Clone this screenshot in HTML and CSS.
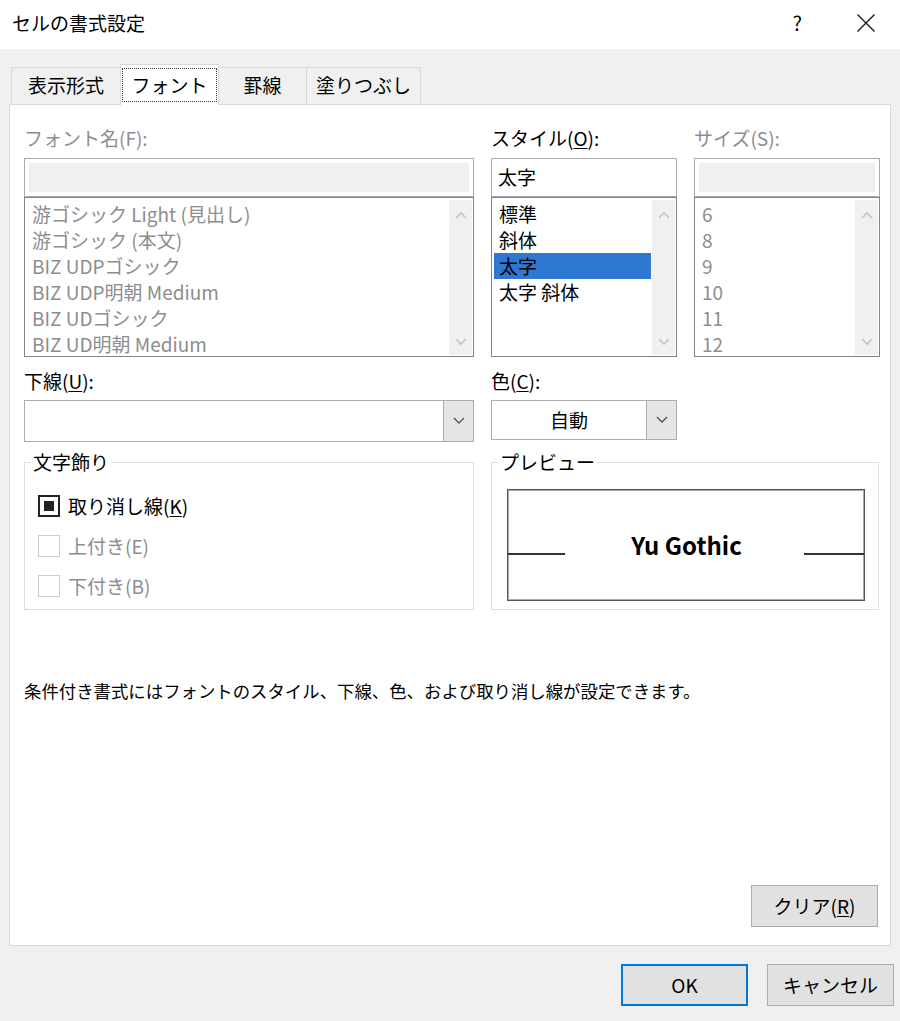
FILE: index.html
```html
<!DOCTYPE html>
<html lang="ja">
<head>
<meta charset="utf-8">
<title>セルの書式設定</title>
<link rel="stylesheet" href="styles.css">
</head>
<body>
<div class="dialog">
  <div class="titlebar">
    <div class="title">セルの書式設定</div>
    <div class="title-btns">
      <span class="help">?</span>
      <svg class="close" width="20" height="20" viewBox="0 0 20 20"><path d="M1.5 1.5 L18.5 18.5 M18.5 1.5 L1.5 18.5" stroke="#1a1a1a" stroke-width="1.4" fill="none"/></svg>
    </div>
  </div>

  <div class="tabs">
    <div class="tab t1">表示形式</div>
    <div class="tab active"><span class="focus">フォント</span></div>
    <div class="tab t3">罫線</div>
    <div class="tab t4">塗りつぶし</div>
  </div>

  <div class="panel">
    <div class="grid">
      <div class="label disabled">フォント名(F):</div>
      <div class="label">スタイル(<u>O</u>):</div>
      <div class="label disabled">サイズ(S):</div>

      <div class="input disabled"><div class="fill"></div></div>
      <div class="input"><span class="val">太字</span></div>
      <div class="input disabled"><div class="fill"></div></div>

      <div class="list disabled">
        <div class="items">
          <div class="item">游ゴシック Light (見出し)</div>
          <div class="item">游ゴシック (本文)</div>
          <div class="item">BIZ UDPゴシック</div>
          <div class="item">BIZ UDP明朝 Medium</div>
          <div class="item">BIZ UDゴシック</div>
          <div class="item">BIZ UD明朝 Medium</div>
        </div>
        <div class="sbar">
          <svg width="14" height="10" viewBox="0 0 14 10"><path d="M2 8 L7 3 L12 8" stroke="#c4c4c4" stroke-width="1.6" fill="none"/></svg>
          <svg width="14" height="10" viewBox="0 0 14 10"><path d="M2 2 L7 7 L12 2" stroke="#c4c4c4" stroke-width="1.6" fill="none"/></svg>
        </div>
      </div>
      <div class="list">
        <div class="items">
          <div class="item">標準</div>
          <div class="item">斜体</div>
          <div class="item sel">太字</div>
          <div class="item">太字 斜体</div>
        </div>
        <div class="sbar">
          <svg width="14" height="10" viewBox="0 0 14 10"><path d="M2 8 L7 3 L12 8" stroke="#c4c4c4" stroke-width="1.6" fill="none"/></svg>
          <svg width="14" height="10" viewBox="0 0 14 10"><path d="M2 2 L7 7 L12 2" stroke="#c4c4c4" stroke-width="1.6" fill="none"/></svg>
        </div>
      </div>
      <div class="list disabled">
        <div class="items">
          <div class="item">6</div>
          <div class="item">8</div>
          <div class="item">9</div>
          <div class="item">10</div>
          <div class="item">11</div>
          <div class="item">12</div>
        </div>
        <div class="sbar">
          <svg width="14" height="10" viewBox="0 0 14 10"><path d="M2 8 L7 3 L12 8" stroke="#c4c4c4" stroke-width="1.6" fill="none"/></svg>
          <svg width="14" height="10" viewBox="0 0 14 10"><path d="M2 2 L7 7 L12 2" stroke="#c4c4c4" stroke-width="1.6" fill="none"/></svg>
        </div>
      </div>

      <div class="label row2">下線(<u>U</u>):</div>
      <div class="label row2 span2">色(<u>C</u>):</div>

      <div class="combo under">
        <div class="cval"></div>
        <div class="cbtn"><svg width="14" height="10" viewBox="0 0 14 10"><path d="M2 2 L7 7 L12 2" stroke="#555" stroke-width="1.4" fill="none"/></svg></div>
      </div>
      <div class="combo color">
        <div class="cval center">自動</div>
        <div class="cbtn"><svg width="14" height="10" viewBox="0 0 14 10"><path d="M2 2 L7 7 L12 2" stroke="#555" stroke-width="1.4" fill="none"/></svg></div>
      </div>
      <div></div>

      <fieldset class="group effects">
        <legend>文字飾り</legend>
        <div class="check"><span class="box on"><span class="dot"></span></span><span>取り消し線(<u>K</u>)</span></div>
        <div class="check disabled"><span class="box"></span><span>上付き(E)</span></div>
        <div class="check disabled"><span class="box"></span><span>下付き(B)</span></div>
      </fieldset>
      <fieldset class="group preview">
        <legend>プレビュー</legend>
        <div class="pbox">
          <div class="pline left"></div>
          <div class="ptext">Yu Gothic</div>
          <div class="pline right"></div>
        </div>
      </fieldset>
    </div>

    <p class="note">条件付き書式にはフォントのスタイル、下線、色、および取り消し線が設定できます。</p>

    <div class="panel-foot">
      <button class="btn">クリア(<u>R</u>)</button>
    </div>
  </div>

  <div class="footer">
    <button class="btn default">OK</button>
    <button class="btn">キャンセル</button>
  </div>
</div>
</body>
</html>
```

FILE: styles.css
```css
* { box-sizing: border-box; }
html, body { margin: 0; padding: 0; }
body {
  background: #f0f0f0;
  font-family: "Noto Sans CJK JP", "Noto Sans", sans-serif;
  font-size: 19px;
  color: #000;
  width: 900px;
  height: 1021px;
  overflow: hidden;
}
u { text-decoration: underline; text-underline-offset: 2px; text-decoration-thickness: 1px; }

.titlebar {
  height: 49px;
  background: #fff;
  display: flex;
  align-items: center;
  justify-content: space-between;
  padding: 0 24px 0 12px;
}
.title { font-size: 19px; line-height: 26px; margin-top: -4px; }
.title-btns { display: flex; align-items: center; gap: 54px; margin-top: -4px; }
.help { font-size: 20px; line-height: 26px; }

.tabs {
  display: flex;
  align-items: flex-end;
  height: 55px;
  padding-left: 11px;
}
.tab {
  height: 37px;
  border: 1px solid #d9d9d9;
  border-bottom: none;
  background: #f0f0f0;
  font-size: 19px;
  line-height: 34px;
  text-align: center;
  margin-right: -1px;
}
.t1 { width: 110px; }
.t3 { width: 89px; }
.t4 { width: 115px; }
.tab.active {
  width: 99px;
  height: 41px;
  background: #fff;
  position: relative;
  z-index: 2;
  margin-bottom: -1px;
  padding-top: 3px;
}
.focus {
  display: inline-block;
  border: 1px dotted #333;
  padding: 0 8px;
  line-height: 32px;
}

.panel {
  margin: 0 9px;
  height: 842px;
  background: #fff;
  border: 1px solid #d9d9d9;
  padding: 20px 10px 18px 14px;
  display: flex;
  flex-direction: column;
}
.grid {
  display: grid;
  grid-template-columns: 450px 186px 186px;
  column-gap: 17px;
}
.label { line-height: 26px; margin-bottom: 7px; }
.label.row2 { margin-top: 11px; margin-bottom: 6px; }
.span2 { grid-column: span 2; }
.disabled { color: #8d8d8d; }

.input {
  height: 39px;
  border: 1px solid #adadad;
  padding: 4px;
}
.input .fill { background: #f0f0f0; height: 100%; }
.input .val { display: block; line-height: 28px; padding-left: 2px; color: #000; }

.list {
  height: 160px;
  border: 1px solid #828282;
  display: flex;
  padding: 2px 1px 1px 1px;
}
.list .items { flex: 1; padding-top: 1px; }
.item { line-height: 26px; padding-left: 6px; white-space: nowrap; }
.item.sel { background: #2e78d3; color: #fff; margin: 0 1px 0 1px; padding-left: 5px; }
.list:not(.disabled) .item { color: #000; }
.sbar {
  width: 23px;
  background: #f0f0f0;
  display: flex;
  flex-direction: column;
  justify-content: space-between;
  align-items: center;
  padding: 10px 0 8px;
}

.combo {
  border: 1px solid #adadad;
  display: flex;
  background: #fff;
}
.combo.under { height: 42px; }
.combo.color { height: 40px; }
.cval { flex: 1; line-height: 38px; }
.cval.center { text-align: center; }
.cbtn {
  width: 30px;
  background: #e5e5e5;
  border-left: 1px solid #adadad;
  display: flex;
  align-items: center;
  justify-content: center;
}

.group {
  margin: 7px 0 0 0;
  border: 1px solid #dcdcdc;
  min-width: 0;
}
.group legend {
  padding: 0 2px;
  line-height: 26px;
}
.effects {
  grid-column: 1;
  padding: 11px 13px 3px 13px;
}
.effects legend { margin-left: -7px; }
.preview {
  grid-column: 2 / span 2;
  width: 388px;
  padding: 14px 13px 8px 15px;
}
.preview legend { margin-left: -9px; }
.check {
  display: flex;
  align-items: center;
  height: 40px;
  gap: 8px;
  line-height: 26px;
}
.box {
  width: 22px;
  height: 22px;
  border: 1px solid #cccccc;
  display: flex;
  align-items: center;
  justify-content: center;
  background: #fff;
}
.box.on { border: 2px solid #222; }
.box .dot { width: 10px; height: 10px; background: #222; }

.pbox {
  height: 112px;
  border: 1px solid #555;
  box-shadow: inset 0 0 0 1px #aaa;
  display: flex;
  align-items: center;
}
.pline { height: 2px; background: #333; margin-top: 18px; }
.pline.left { width: 57px; }
.pline.right { width: 60px; }
.ptext {
  flex: 1;
  text-align: center;
  font-weight: 700;
  font-size: 24px;
  line-height: 30px;
  padding-left: 4px;
}

.note {
  margin: 68px 0 0 0;
  line-height: 26px;
  font-size: 17.4px;
}
.panel-foot {
  margin-top: auto;
  display: flex;
  justify-content: flex-end;
  padding-right: 2px;
}
.btn {
  font-family: inherit;
  font-size: 19px;
  color: #000;
  width: 127px;
  height: 42px;
  background: #e1e1e1;
  border: 1px solid #adadad;
  padding: 0;
  line-height: 38px;
}
.btn.default { border: 2px solid #0078d7; }

.footer {
  display: flex;
  justify-content: flex-end;
  gap: 19px;
  padding: 18px 6px 0 0;
}
```
